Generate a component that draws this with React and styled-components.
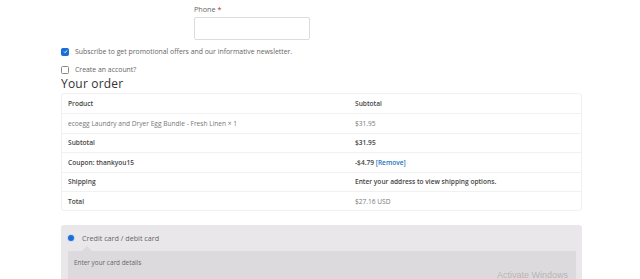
import React from "react";
import styled, { createGlobalStyle } from "styled-components";

const Global = createGlobalStyle`
  html, body {
    margin: 0;
    padding: 0;
    background: #fff;
    font-family: "Open Sans", "Liberation Sans", sans-serif;
  }
`;

const Page = styled.div`
  position: relative;
  width: 640px;
  height: 279px;
  overflow: hidden;
`;

const Content = styled.div`
  width: 521px;
  margin-left: 61px;
  display: flex;
  flex-direction: column;
`;

const FieldRow = styled.div`
  padding-left: 133px;
  padding-top: 5px;
  display: flex;
  flex-direction: column;
`;

const Label = styled.label`
  font-size: 7.2px;
  line-height: 9px;
  color: #666;
  margin-bottom: 3px;

  span {
    color: #b22;
  }
`;

const Input = styled.div`
  width: 114px;
  height: 21px;
  border: 1px solid #dcdcdc;
  border-radius: 2px;
  background: #fff;
`;

const CheckRow = styled.div`
  display: flex;
  align-items: center;
  gap: 6px;
  margin-top: ${(props) => props.top}px;
  font-size: 6.9px;
  color: #666;
  height: 9px;
`;

const Box = styled.span`
  width: 6px;
  height: 6px;
  border-radius: 1.5px;
  border: 1px solid ${(props) => (props.checked ? "#1a6fd6" : "#888")};
  background: ${(props) => (props.checked ? "#1a6fd6" : "#fff")};
  display: flex;
  align-items: center;
  justify-content: center;
`;

const Heading = styled.h3`
  margin: 3px 0 0;
  font-size: 12px;
  line-height: 14px;
  font-weight: 400;
  color: #333;
  letter-spacing: 0.2px;
`;

const Table = styled.div`
  margin-top: 2px;
  border: 1px solid #f1f1f1;
  border-radius: 3px;
`;

const Row = styled.div`
  display: grid;
  grid-template-columns: 287px 1fr;
  height: 19.4px;
  align-items: center;
  border-top: ${(props) => (props.first ? "none" : "1px solid #f1f1f1")};
  box-sizing: border-box;
  font-size: 6.6px;
  color: ${(props) => (props.bold ? "#444" : "#777")};
  font-weight: ${(props) => (props.bold ? 600 : 400)};
`;

const Cell = styled.div`
  padding-left: 6px;
  white-space: nowrap;

  a {
    color: #1e73be;
    text-decoration: none;
  }
`;

const Payment = styled.div`
  margin-top: 14px;
  background: #e9e7ea;
  border-radius: 3px;
  padding: 8px 6px 0 7px;
  height: 60px;
`;

const Method = styled.div`
  display: flex;
  align-items: center;
  gap: 8px;
  font-size: 7.2px;
  color: #666;
  height: 9px;
`;

const Radio = styled.span`
  width: 6px;
  height: 6px;
  border-radius: 50%;
  background: #1a6fd6;
  box-shadow: 0 0 0 1px #c9d8f2;
`;

const CardBox = styled.div`
  position: relative;
  margin-top: 9px;
  background: #dcdadc;
  height: 40px;
  padding: 7px 6px;
  box-sizing: border-box;
  font-size: 6.4px;
  color: #666;

  &::before {
    content: "";
    position: absolute;
    top: -5px;
    left: 14px;
    border: 5px solid transparent;
    border-top: none;
    border-bottom-color: #dcdadc;
  }
`;

const Watermark = styled.div`
  position: absolute;
  left: 497px;
  top: 270px;
  font-size: 9px;
  color: rgba(120, 120, 120, 0.4);
  font-family: "Liberation Sans", sans-serif;
`;

const rows = [
  { left: "Product", right: "Subtotal", bold: true },
  { left: "ecoegg Laundry and Dryer Egg Bundle - Fresh Linen  × 1", right: "$31.95" },
  { left: "Subtotal", right: "$31.95", bold: true },
  {
    left: "Coupon: thankyou15",
    right: (
      <>
        -$4.79 <a href="#">[Remove]</a>
      </>
    ),
    bold: true,
  },
  { left: "Shipping", right: "Enter your address to view shipping options.", bold: true },
  { left: "Total", right: "$27.16 USD", totalLeft: true },
];

export default function App() {
  return (
    <Page>
      <Global />
      <Content>
        <FieldRow>
          <Label>
            Phone <span>*</span>
          </Label>
          <Input />
        </FieldRow>
        <CheckRow top={7}>
          <Box checked>
            <svg width="5" height="5" viewBox="0 0 10 10">
              <path d="M2 5.2 L4.2 7.4 L8.2 2.8" stroke="#fff" strokeWidth="1.8" fill="none" />
            </svg>
          </Box>
          Subscribe to get promotional offers and our informative newsletter.
        </CheckRow>
        <CheckRow top={9}>
          <Box />
          Create an account?
        </CheckRow>
        <Heading>Your order</Heading>
        <Table>
          {rows.map((r, i) => (
            <Row key={i} first={i === 0} bold={r.bold}>
              <Cell style={r.totalLeft ? { color: "#444", fontWeight: 600 } : undefined}>
                {r.left}
              </Cell>
              <Cell>{r.right}</Cell>
            </Row>
          ))}
        </Table>
        <Payment>
          <Method>
            <Radio />
            Credit card / debit card
          </Method>
          <CardBox>Enter your card details</CardBox>
        </Payment>
      </Content>
      <Watermark>Activate Windows</Watermark>
    </Page>
  );
}
